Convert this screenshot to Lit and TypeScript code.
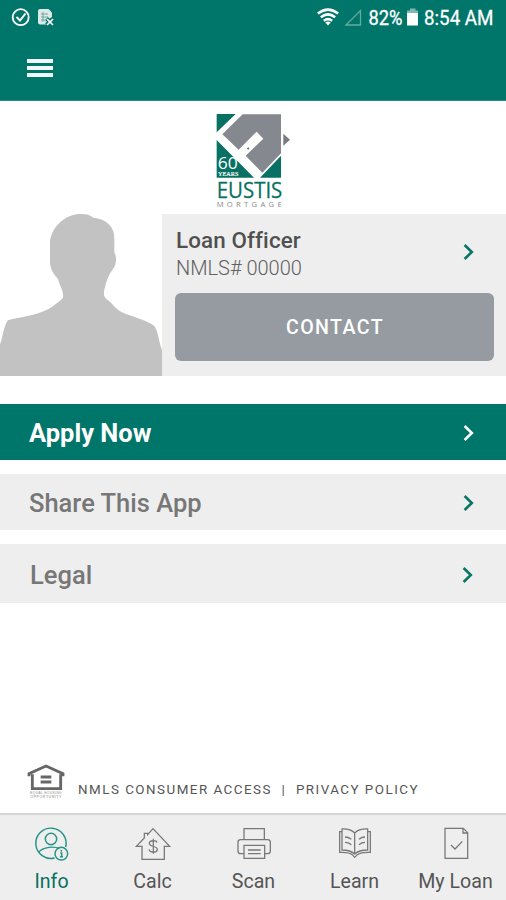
import { LitElement, html, css, svg } from "lit";
import { customElement } from "lit/decorators.js";
import { classMap } from "lit/directives/class-map.js";

const chevron = html`<svg class="chev" width="12" height="18" viewBox="0 0 12 18">
  <path d="M1.6 2 L8.8 9 L1.6 16" fill="none" stroke="currentColor" stroke-width="2.6" />
</svg>`;

const icons = {
  info: svg`
    <path d="M62 108 A45.5 45.5 0 1 1 95 75" />
    <circle cx="51" cy="51" r="17" />
    <path d="M14 91 C27 74 62 72 76 80" />
    <circle cx="82" cy="95" r="19" />
    <path d="M82 84v5M79 93h4v11M78 104h9" />`,
  calc: svg`
    <path d="M4 73 L28 48 V34 H38 V38 L54 20 L104 73 H88 V112 H21 V73 Z" />
    <path d="M66 62 C64 54 43 54 43 64 C43 77 68 70 67 83 C66 94 44 92 42 82 M55 50 V95" />`,
  scan: svg`
    <path d="M24 52 V20 H85 V52" />
    <path d="M24 95 H14 Q6 95 6 87 V61 Q6 53 14 53 H95 Q103 53 103 61 V87 Q103 95 95 95 H86" />
    <path d="M24 70 H86 V109 H24 Z M36 84h38M36 95h38" />`,
  learn: svg`
    <path d="M53 33 Q40 20 15 21 V84 Q40 84 53 96 Q66 84 92 84 V21 Q66 20 53 33 V96" />
    <path d="M15 29 H8 V91 Q37 90 46 98 L53 106 L61 98 Q72 90 100 91 V29 H92" />
    <path d="M24 45q10 0 19 7M24 61q10 0 19 7M84 45q-10 0 -18 7M84 61q-10 0 -18 7" />`,
  loan: svg`
    <path d="M21 19 H76 L89 32 V109 H21 Z M75 19 V33 H89" />
    <path d="M39 69 L51 81 L73 58" />`,
};

@customElement("app-root")
export class AppRoot extends LitElement {
  static styles = css`
    :host {
      display: flex;
      flex-direction: column;
      width: 506px;
      height: 900px;
      overflow: hidden;
      background: #fff;
      color: #777;
      font-family: Roboto, "Liberation Sans", sans-serif;
    }
    * { box-sizing: border-box; }
    svg { display: block; flex: none; overflow: visible; }
    header {
      height: 101px;
      flex: none;
      background: #007569;
      border-bottom: 1px solid #2a8a7f;
      color: #fff;
    }
    .status {
      display: flex;
      align-items: center;
      height: 36px;
      padding: 0 0 0 11px;
    }
    .burger {
      width: 26px;
      margin: 23px 0 0 27px;
      display: grid;
      gap: 3px;
    }
    .burger i { height: 4px; background: #f1f8f7; }
    .logo { height: 113px; flex: none; padding: 4px 0 0 200px; }
    .profile { display: flex; height: 162px; flex: none; }
    .card { flex: 1; background: #eee; padding: 0 12px 0 13px; }
    .who { display: flex; height: 79px; justify-content: space-between; }
    .name {
      margin-top: 12px;
      padding-left: 1px;
      font: 500 22.4px/28px Roboto, sans-serif;
      letter-spacing: 0.12px;
      color: #505050;
    }
    .nmls {
      padding-left: 1px;
      margin-top: 2px;
      font: 300 20px/24px Roboto, sans-serif;
      color: #606060;
    }
    .who .chev { margin: 29px 19px 0 0; }
    .chev { color: #087565; }
    .contact {
      display: block;
      width: 319px;
      height: 68px;
      border: 0;
      border-radius: 6px;
      background: #959ba1;
      color: #fff;
      font: 500 19.6px/66px Roboto, sans-serif;
      letter-spacing: 1.4px;
      text-align: center;
      padding: 2px 0 0 1px;
    }
    .menu { margin-top: 28px; display: grid; gap: 14px; }
    .row {
      display: flex;
      align-items: center;
      justify-content: space-between;
      height: 56px;
      padding: 1px 31px 0 29px;
      background: #eee;
      font: 500 25.5px/30px Roboto, sans-serif;
      color: #777;
    }
    .row .chev { margin-top: 0; }
    .row.primary { background: #007569; color: #fff; font-weight: 700; }
    .row.primary .chev { color: #fff; }
    .row.last { height: 59px; padding: 2px 32px 0 30px; }
    .legal {
      margin-top: auto;
      height: 50px;
      display: flex;
      align-items: flex-start;
      padding-left: 28px;
      font-size: 13.4px;
      line-height: 16px;
      letter-spacing: 1.48px;
      color: #555;
      white-space: pre;
    }
    .legal p { margin: 19px 0 0 13px; }
    nav {
      height: 87px;
      flex: none;
      display: grid;
      grid-template-columns: repeat(5, 1fr);
      background: #eee;
      border-top: 2px solid #d6d6d6;
      padding-left: 1px;
    }
    .tab {
      display: flex;
      flex-direction: column;
      align-items: center;
      font-size: 19.6px;
      line-height: 24px;
      color: #555;
      white-space: nowrap;
    }
    .tab svg { margin-top: 7px; fill: none; stroke: #777; stroke-width: 3.8; }
    .tab span { margin-top: 8px; }
    .tab.active { color: #08705f; }
    .tab.active svg { stroke: #259484; stroke-width: 4.4; }
  `;

  private rows = [
    { label: "Apply Now", cls: "primary" },
    { label: "Share This App", cls: "mid" },
    { label: "Legal", cls: "last" },
  ];

  private tabs = [
    { label: "Info", icon: icons.info },
    { label: "Calc", icon: icons.calc },
    { label: "Scan", icon: icons.scan },
    { label: "Learn", icon: icons.learn },
    { label: "My Loan", icon: icons.loan },
  ];

  render() {
    return html`
      <header>
        <div class="status">
          <svg width="495" height="36" viewBox="11 0 495 36" font-family="Roboto, sans-serif">
            <circle cx="20.7" cy="17.2" r="8" fill="none" stroke="#fff" stroke-width="1.8" />
            <path d="M16.5 17 L20 20.5 L25.5 13.5" fill="none" stroke="#fff" stroke-width="2" />
            <path d="M40 9 H48.5 L52 12.5 V24.5 H40 Q38 24.5 38 22.5 V11 Q38 9 40 9Z" fill="#dce9e7" />
            <path d="M41 14h7M41 17h7M41 20h4M43 12v10" stroke="#6aa9a1" stroke-width="1" />
            <path d="M46.5 18.5 L53 25 M53 18.5 L46.5 25" stroke="#007569" stroke-width="4" />
            <path d="M47 19 L53 25 M53 19 L47 25" stroke="#fff" stroke-width="1.7" />
            <g fill="none" stroke="#fff" stroke-width="2.5">
              <path d="M317.8 13.6 Q328 5.6 338.2 13.6" />
              <path d="M320.8 17.2 Q328 11.6 335.2 17.2" />
              <path d="M323.8 20.7 Q328 17.6 332.2 20.7" />
            </g>
            <path d="M325.2 22.3 Q328 20.6 330.8 22.3 L328 25.5Z" fill="#fff" />
            <path d="M346 25 L360.5 10.5 V25Z" fill="none" stroke="#66aaa2" stroke-width="1.3" />
            <text x="368.5" y="25.3" font-size="21" fill="#fff" stroke="#fff" stroke-width=".3" textLength="34" lengthAdjust="spacingAndGlyphs">82%</text>
            <path d="M410 8.5 H415.5 V10.5 H418 V13 H407 V10.5 H410Z" fill="#7fb9b2" />
            <rect x="407" y="13" width="11" height="12.5" fill="#fff" />
            <text x="424" y="25.3" font-size="21" fill="#fff" stroke="#fff" stroke-width=".3" textLength="69.5" lengthAdjust="spacingAndGlyphs">8:54 AM</text>
          </svg>
        </div>
        <div class="burger"><i></i><i></i><i></i></div>
      </header>

      <div class="logo">
        <svg width="105" height="109" viewBox="0 0 315 327">
          <path d="M50 27H107L50 82Z M50 105L162 218H50Z M243 152V218H180Z" fill="#087163" />
          <path d="M128 28H243V145L187 203L137 152L190 101L170 80L116 134L67 88Z" fill="#85888e" />
          <path d="M250 86L270 104L250 122Z" fill="#777b80" />
          <path d="M141 130l4-3 3 4-4 3Z" fill="#2f756c" />
          <text x="53" y="193" font-family="Open Sans, sans-serif" font-size="49" fill="#fff" textLength="60" lengthAdjust="spacingAndGlyphs">60</text>
          <text x="54" y="212" font-family="Liberation Serif, serif" font-size="19" fill="#fff" stroke="#fff" stroke-width=".6" textLength="61" lengthAdjust="spacingAndGlyphs">YEARS</text>
          <text x="50" y="278" font-family="Open Sans, sans-serif" font-size="66" fill="#087163" stroke="#087163" stroke-width=".8" textLength="197" lengthAdjust="spacingAndGlyphs">EUSTIS</text>
          <text x="50" y="305" font-family="Open Sans, sans-serif" font-size="23" fill="#888" textLength="195">MORTGAGE</text>
        </svg>
      </div>

      <section class="profile">
        <svg width="162" height="162" viewBox="0 27 486 486">
          <path fill="#c2c2c2" d="M0 513V418C8 402 10 364 24 346C60 336 110 332 150 310C164 298 180 290 189 278C192 258 178 240 174 222C158 204 150 188 150 170V115C151 72 188 34 230 28C250 26 266 26 280 38C318 42 344 64 343 100V143C352 156 348 180 340 190C326 208 318 232 314 250C308 270 314 280 324 286C340 298 346 312 366 322C396 336 442 346 462 362C474 374 474 402 486 436V513Z" />
        </svg>
        <div class="card">
          <div class="who">
            <div>
              <div class="name">Loan Officer</div>
              <div class="nmls">NMLS# 00000</div>
            </div>
            ${chevron}
          </div>
          <button class="contact">CONTACT</button>
        </div>
      </section>

      <div class="menu">
        ${this.rows.map(
          (r) => html`<div class=${classMap({ row: true, [r.cls]: true })}><span>${r.label}</span>${chevron}</div>`
        )}
      </div>

      <div class="legal">
        <svg width="37" height="37" viewBox="84 24 111 111">
          <path d="M87 64V56L138 33L189 56V64M97 58V101H182V58" fill="none" stroke="#666" stroke-width="8.5" />
          <path d="M122 66H154M122 81H154" stroke="#666" stroke-width="9" />
          <text x="91" y="118" font-family="Liberation Sans, sans-serif" font-size="11" fill="#888" textLength="95" lengthAdjust="spacingAndGlyphs">EQUAL HOUSING</text>
          <text x="91" y="129" font-family="Liberation Sans, sans-serif" font-size="11" fill="#888" textLength="95" lengthAdjust="spacingAndGlyphs">OPPORTUNITY</text>
        </svg>
        <p>NMLS CONSUMER ACCESS  |  PRIVACY POLICY</p>
      </div>

      <nav>
        ${this.tabs.map(
          (t, i) => html`<div class=${classMap({ tab: true, active: i === 0 })}>
            <svg width="36" height="40" viewBox="0 0 108 120">${t.icon}</svg><span>${t.label}</span>
          </div>`
        )}
      </nav>
    `;
  }
}
